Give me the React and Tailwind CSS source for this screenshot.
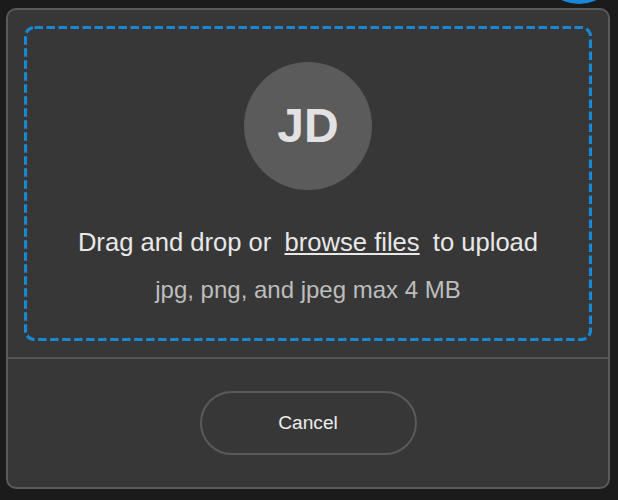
import React from 'react';

export default function App() {
    return (
        <div
            className="relative w-[618px] h-[500px] overflow-hidden bg-[#1b1b1b] pl-[6px] pt-[8px]"
            style={{ fontFamily: '"Liberation Sans", Arial, Helvetica, sans-serif' }}
        >
            {/* Close button peeking in from above */}
            <div className="absolute left-[539px] top-[-76px] h-[80px] w-[80px] rounded-full bg-[#1a88d6]"></div>

            <div className="flex w-[604px] h-[481px] flex-col rounded-[10px] border-2 border-[#5a5a5a] bg-[#373737]">
                {/* Drop zone */}
                <div className="p-[16px]">
                    <div className="relative flex flex-col items-center rounded-[10px] border-[3px] border-transparent pt-[33px] pb-[30px]">
                        <svg className="pointer-events-none absolute left-[-3px] top-[-3px]" width="568" height="315">
                            <rect x="1.5" y="1.5" width="565" height="312" rx="9" fill="none" stroke="#1a87d3" strokeWidth="3.2" strokeDasharray="8.5 3.5" />
                        </svg>
                        <div className="flex h-[128px] w-[128px] items-center justify-center rounded-full bg-[#5b5b5b]">
                            <span className="text-[48px] font-bold leading-none text-[#e2e2e2]">JD</span>
                        </div>
                        <p className="mt-[33px] text-[25.6px] leading-[38px] text-[#e8e8e8]">
                            Drag and drop or{' '}
                            <a href="#" className="mx-[6px] underline decoration-2 underline-offset-[2px]">browse files</a>
                            {' '}to upload
                        </p>
                        <p className="mt-[11px] text-[24px] leading-[36px] text-[#bdbdbd]">
                            jpg, png, and jpeg max 4 MB
                        </p>
                    </div>
                </div>

                <div className="h-[2px] bg-[#555555]"></div>

                {/* Footer */}
                <div className="flex flex-1 items-center justify-center">
                    <button className="h-[64px] w-[217px] rounded-full border-2 border-[#5a5a5a] text-[19.2px] text-[#ececec]">
                        Cancel
                    </button>
                </div>
            </div>
        </div>
    );
}
